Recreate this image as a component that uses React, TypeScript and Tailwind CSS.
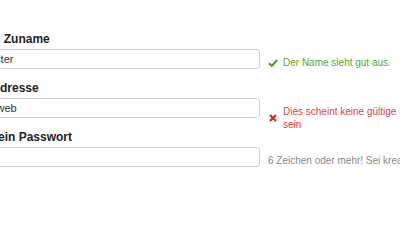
import type { ReactNode } from 'react'

type Status = 'ok' | 'error' | 'hint'

interface Field {
  label: string
  value: string
  status: Status
  message: string
}

const fields: Field[] = [
  { label: 'Vor- und Zuname', value: 'Max Muster', status: 'ok', message: 'Der Name sieht gut aus.' },
  {
    label: 'E-Mail-Adresse',
    value: 'max.k@web',
    status: 'error',
    message: 'Dies scheint keine gültige E-Mail-Adresse zu sein',
  },
  { label: 'Wähle dein Passwort', value: '', status: 'hint', message: '6 Zeichen oder mehr! Sei kreativ.' },
]

function CheckIcon() {
  return (
    <svg width="10" height="8" viewBox="0 0 10 8" className="block">
      <path d="M1 4.2 L3.8 7 L9.2 1" fill="none" stroke="#4e9f27" strokeWidth="2" />
    </svg>
  )
}

function CrossIcon() {
  return (
    <svg width="8" height="8" viewBox="0 0 8 8" className="block">
      <path d="M1 1 L7 7 M7 1 L1 7" fill="none" stroke="#cc2a2a" strokeWidth="2.2" />
    </svg>
  )
}

function Message({ status, children }: { status: Status; children: ReactNode }) {
  if (status === 'hint') {
    return <div className="pl-[2px] text-[10px] leading-[13px] text-[#8a8a8a] whitespace-nowrap">{children}</div>
  }
  const color = status === 'ok' ? 'text-[#57a82c]' : 'text-[#d9413e]'
  return (
    <div className={`flex items-center ${color}`}>
      <span className="w-[13px] shrink-0 flex justify-center">
        {status === 'ok' ? <CheckIcon /> : <CrossIcon />}
      </span>
      <span className="ml-[4px] w-[206px] text-[10px] leading-[13px]">{children}</span>
    </div>
  )
}

export default function App() {
  return (
    <div className="w-[400px] h-[200px] overflow-hidden bg-white font-['Liberation_Sans',Arial,sans-serif]">
      <div className="pt-[31px] -ml-[48px] flex flex-col gap-[11px]">
        {fields.map(f => (
          <div key={f.label}>
            <label className="block mb-[2px] text-[12px] leading-[16px] font-bold text-[#222] whitespace-nowrap">
              {f.label}
            </label>
            {/* fixed row height: a wrapped message hangs below without pushing the next field */}
            <div className="flex items-start h-[20px]">
              <input
                type="text"
                readOnly
                value={f.value}
                className="w-[308px] h-[20px] shrink-0 border border-[#cfcfcf] rounded-[3px] px-[3px] text-[11px] text-[#333] bg-white outline-none"
              />
              <div className="ml-[6px] mt-[7px] shrink-0">
                <Message status={f.status}>{f.message}</Message>
              </div>
            </div>
          </div>
        ))}
      </div>
    </div>
  )
}
